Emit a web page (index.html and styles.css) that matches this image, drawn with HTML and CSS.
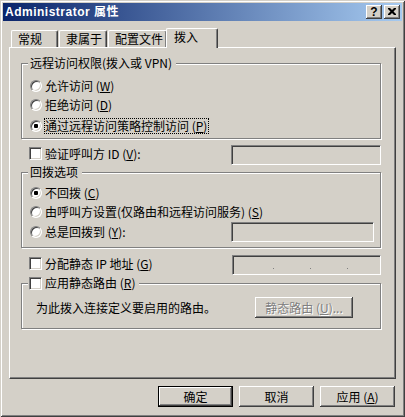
FILE: index.html
```html
<!DOCTYPE html>
<html lang="zh-CN">
<head>
<meta charset="utf-8">
<title>Administrator 属性</title>
<link rel="stylesheet" href="styles.css">
</head>
<body>
<div class="window">
  <div class="titlebar">
    <span class="title">Administrator 属性</span>
    <div class="tbtns">
      <span class="tbtn help">?</span>
      <span class="tbtn close"><svg width="8" height="7" viewBox="0 0 8 7"><path d="M0 0h2l2 2 2-2h2v1l-2.5 2.5 2.5 2.5v1h-2l-2-2-2 2h-2v-1l2.5-2.5-2.5-2.5z" fill="#000"/></svg></span>
    </div>
  </div>
  <div class="content">
    <div class="tabs">
      <div class="tab t1">常规</div>
      <div class="tab t2">隶属于</div>
      <div class="tab t3">配置文件</div>
      <div class="tab active">拨入</div>
    </div>
    <div class="panel">
      <div class="group g1">
        <span class="legend">远程访问权限(拨入或 VPN)</span>
        <div class="opt"><span class="radio"></span><span class="lbl">允许访问 (<u>W</u>)</span></div>
        <div class="opt"><span class="radio"></span><span class="lbl">拒绝访问 (<u>D</u>)</span></div>
        <div class="opt o3"><span class="radio on"></span><span class="lbl focus">通过远程访问策略控制访问 (<u>P</u>)</span></div>
      </div>
      <div class="row r-verify">
        <div class="cbwrap"><span class="check"></span><span class="lbl">验证呼叫方 ID (<u>V</u>):</span></div>
        <span class="field f-verify"></span>
      </div>
      <div class="group g2">
        <span class="legend">回拨选项</span>
        <div class="opt"><span class="radio on"></span><span class="lbl">不回拨 (<u>C</u>)</span></div>
        <div class="opt"><span class="radio"></span><span class="lbl">由呼叫方设置(仅路由和远程访问服务) (<u>S</u>)</span></div>
        <div class="opt o-always"><span class="radio"></span><span class="lbl">总是回拨到 (<u>Y</u>):</span><span class="field f-always"></span></div>
      </div>
      <div class="row r-ip">
        <div class="cbwrap"><span class="check"></span><span class="lbl">分配静态 IP 地址 (<u>G</u>)</span></div>
        <span class="field ip"><span class="dot"></span><span class="dot"></span><span class="dot"></span></span>
      </div>
      <div class="group g3">
        <span class="legend cblegend"><span class="check"></span><span class="lbl">应用静态路由 (<u>R</u>)</span></span>
        <div class="routes">
          <span class="lbl">为此拨入连接定义要启用的路由。</span>
          <span class="btn disabled wide">静态路由 (<u>U</u>)...</span>
        </div>
      </div>
    </div>
    <div class="buttons">
      <span class="btn default">确定</span>
      <span class="btn">取消</span>
      <span class="btn">应用 (<u>A</u>)</span>
    </div>
  </div>
</div>
</body>
</html>
```

FILE: styles.css
```css
* { box-sizing: border-box; }
html, body { margin: 0; padding: 0; }
body {
  width: 405px;
  height: 417px;
  background: #D4D0C8;
  font-family: "Noto Sans CJK SC", sans-serif;
  font-size: 12px;
  color: #000;
}
u { text-decoration: underline; text-underline-offset: 1px; }

.window {
  width: 405px;
  height: 417px;
  padding: 3px;
  background: #D4D0C8;
  box-shadow: inset 1px 1px 0 #D4D0C8, inset -1px -1px 0 #404040, inset 2px 2px 0 #fff, inset -2px -2px 0 #808080;
  display: flex;
  flex-direction: column;
}

.titlebar {
  height: 18px;
  flex: none;
  display: flex;
  align-items: center;
  justify-content: space-between;
  padding: 0 2px;
  background: linear-gradient(to right, #0A246A, #A6CAF0);
}
.title {
  color: #fff;
  font-family: "Liberation Sans", "Noto Sans CJK SC", sans-serif;
  font-weight: bold;
  font-size: 12px;
  letter-spacing: 0.5px;
  line-height: 18px;
  white-space: nowrap;
}
.tbtns { display: flex; gap: 2px; }
.tbtn {
  width: 16px;
  height: 14px;
  background: #D4D0C8;
  box-shadow: inset -1px -1px 0 #404040, inset 1px 1px 0 #fff, inset -2px -2px 0 #808080, inset 2px 2px 0 #D4D0C8;
  display: flex;
  align-items: center;
  justify-content: center;
}
.help {
  font-family: "Liberation Sans", sans-serif;
  font-weight: bold;
  font-size: 12px;
  line-height: 14px;
  padding-bottom: 1px;
}
.close svg { display: block; margin-bottom: 1px; }

.content {
  flex: 1;
  padding: 7px 6px 0 6px;
  display: flex;
  flex-direction: column;
}

.tabs {
  display: flex;
  align-items: flex-end;
  height: 19px;
  padding-left: 2px;
  gap: 1px;
  position: relative;
  z-index: 1;
}
.tab {
  height: 17px;
  padding-left: 6px;
  line-height: 14px;
  padding-top: 1px;
  background: #D4D0C8;
  border-top: 1px solid #fff;
  border-left: 1px solid #fff;
  border-right: 1px solid #404040;
  border-radius: 2px 2px 0 0;
  box-shadow: inset -1px 0 0 #808080;
  white-space: nowrap;
}
.t1 { width: 47px; }
.t2 { width: 48px; }
.t3 { width: 59px; }
.tab.active {
  width: 52px;
  height: 20px;
  margin-left: -2px;
  margin-bottom: -1px;
  padding-left: 7px;
  padding-top: 0;
  line-height: 16px;
}

.panel {
  height: 332px;
  flex: none;
  border: 1px solid;
  border-color: #fff #404040 #404040 #fff;
  box-shadow: inset -1px -1px 0 #808080;
  padding: 15px 14px 0 11px;
}

.group {
  position: relative;
  border: 1px solid #808080;
  box-shadow: inset 1px 1px 0 #fff, 1px 1px 0 #fff;
}
.legend {
  position: absolute;
  top: -8px;
  left: 6px;
  padding: 0 4px 0 2px;
  background: #D4D0C8;
  line-height: 14px;
  white-space: nowrap;
}
.cblegend {
  display: flex;
  align-items: center;
  height: 14px;
  padding: 0 4px 0 1px;
}

.lbl { line-height: 14px; white-space: nowrap; }

.g1 { height: 76px; padding: 12px 0 0 8px; }
.g2 { height: 76px; margin-top: 7px; padding: 10px 6px 0 8px; }
.g3 { height: 46px; margin-top: 8px; padding: 13px 27px 0 14px; }

.opt { display: flex; align-items: center; height: 19px; }
.o3 { margin-top: 2px; }
.o-always { height: 20px; margin-top: 1px; }

.radio {
  flex: none;
  width: 12px;
  height: 12px;
  margin-right: 3px;
  border-radius: 50%;
  background: #fff;
  border: 1px solid;
  border-color: #808080 #fff #fff #808080;
  box-shadow: inset 1px 1px 0 #404040, inset -1px -1px 0 #D4D0C8;
  display: flex;
  align-items: center;
  justify-content: center;
}
.radio.on::after {
  content: "";
  width: 4px;
  height: 4px;
  border-radius: 1px;
  background: #000;
}
.focus {
  border: 1px dotted #000;
  margin-left: -1px;
  padding-right: 1px;
}

.check {
  flex: none;
  width: 13px;
  height: 13px;
  margin-right: 3px;
  background: #fff;
  border: 1px solid;
  border-color: #808080 #fff #fff #808080;
  box-shadow: inset 1px 1px 0 #404040, inset -1px -1px 0 #D4D0C8;
}

.row {
  display: flex;
  align-items: flex-start;
  height: 20px;
  padding-left: 8px;
}
.r-verify { margin-top: 6px; }
.r-ip { margin-top: 7px; }
.cbwrap {
  display: flex;
  align-items: center;
  height: 13px;
  margin-top: 2px;
}

.field {
  flex: none;
  height: 20px;
  margin-left: auto;
  background: #D4D0C8;
  border: 1px solid;
  border-color: #808080 #fff #fff #808080;
  box-shadow: inset 1px 1px 0 #404040, inset -1px -1px 0 #D4D0C8;
}
.f-verify { width: 150px; }
.f-always { width: 143px; }
.ip {
  width: 149px;
  display: flex;
  align-items: flex-end;
  gap: 36px;
  padding: 0 0 5px 40px;
}
.dot { width: 1px; height: 1px; background: #808080; }

.routes {
  display: flex;
  align-items: center;
  height: 21px;
}

.btn {
  flex: none;
  width: 75px;
  height: 21px;
  display: flex;
  align-items: center;
  justify-content: center;
  background: #D4D0C8;
  box-shadow: inset -1px -1px 0 #404040, inset 1px 1px 0 #fff, inset -2px -2px 0 #808080, inset 2px 2px 0 #D4D0C8;
  line-height: 14px;
  white-space: nowrap;
}
.btn.wide { width: 98px; margin-left: auto; }
.btn.disabled { color: #808080; text-shadow: 1px 1px 0 #fff; }
.btn.default {
  border: 1px solid #000;
  box-shadow: inset -1px -1px 0 #404040, inset 1px 1px 0 #fff, inset -2px -2px 0 #808080;
}

.buttons {
  display: flex;
  justify-content: flex-end;
  gap: 6px;
  margin-top: 7px;
  padding-right: 1px;
}
```
